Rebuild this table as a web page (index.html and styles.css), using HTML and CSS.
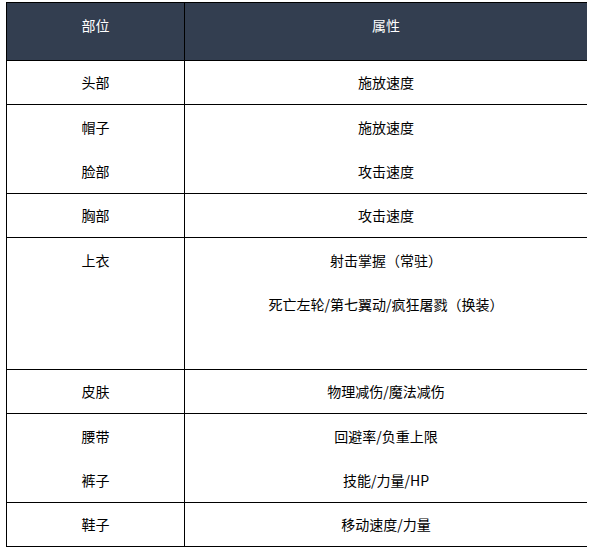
FILE: index.html
```
<!DOCTYPE html>
<html lang="zh-CN">
<head>
<meta charset="utf-8">
<title>部位属性</title>
<link rel="stylesheet" href="styles.css">
</head>
<body>
<table class="gear">
  <colgroup><col class="c1"><col class="c2"></colgroup>
  <thead>
    <tr><th><div class="ln">部位</div></th><th><div class="ln">属性</div></th></tr>
  </thead>
  <tbody>
    <tr class="one"><td><div class="ln">头部</div></td><td><div class="ln">施放速度</div></td></tr>
    <tr><td><div class="ln">帽子</div><div class="ln">脸部</div></td><td><div class="ln">施放速度</div><div class="ln">攻击速度</div></td></tr>
    <tr class="one"><td><div class="ln">胸部</div></td><td><div class="ln">攻击速度</div></td></tr>
    <tr><td><div class="ln">上衣</div><div class="ln"></div><div class="ln last"></div></td><td><div class="ln">射击掌握（常驻）</div><div class="ln">死亡左轮/第七翼动/疯狂屠戮（换装）</div><div class="ln last"></div></td></tr>
    <tr class="one"><td><div class="ln">皮肤</div></td><td><div class="ln">物理减伤/魔法减伤</div></td></tr>
    <tr><td><div class="ln">腰带</div><div class="ln">裤子</div></td><td><div class="ln">回避率/负重上限</div><div class="ln">技能/力量/HP</div></td></tr>
    <tr class="one"><td><div class="ln">鞋子</div></td><td><div class="ln">移动速度/力量</div></td></tr>
  </tbody>
</table>
</body>
</html>
```
FILE: styles.css
```
html, body {
  margin: 0;
  padding: 0;
  background: #ffffff;
}
body {
  padding: 2px 0 0 6px;
  font-family: "Noto Sans CJK SC", "Noto Sans", sans-serif;
  font-size: 14px;
  color: #000000;
}
.gear {
  border-collapse: collapse;
  table-layout: fixed;
  width: 581px;
}
.c1 { width: 178px; }
.gear th,
.gear td {
  padding: 0;
  text-align: center;
  vertical-align: top;
  border-left: 1px solid #000;
  border-top: 1px solid #000;
  border-bottom: 1px solid #000;
}
.gear th {
  background: #333e50;
  color: #ffffff;
  font-weight: normal;
  padding-bottom: 13px;
}
.ln {
  height: 44px;
  line-height: 44px;
  white-space: nowrap;
}
.one .ln,
.ln.last {
  height: 43px;
  line-height: 43px;
}
```
